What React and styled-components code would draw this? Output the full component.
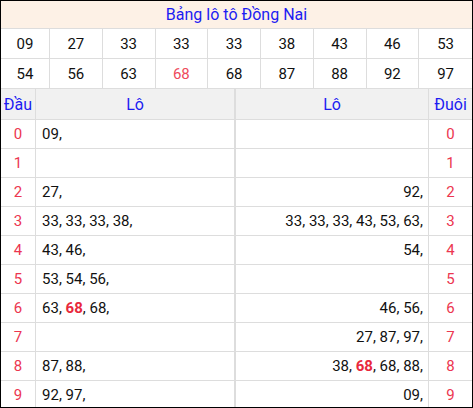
import React from "react";
import styled, { createGlobalStyle } from "styled-components";

const Global = createGlobalStyle`
  html, body { margin: 0; padding: 0; background: #fff; }
  body { font-family: Roboto, "Liberation Sans", Arial, sans-serif; }
`;

const Board = styled.div`
  width: 473px;
  height: 408px;
  box-sizing: border-box;
  border: 1px solid #000;
  overflow: hidden;
  font-family: Roboto, "Liberation Sans", Arial, sans-serif;
  color: #000;
`;

const Title = styled.div`
  height: 28px;
  box-sizing: border-box;
  border-bottom: 1px solid #dddddd;
  background: #fdf1e6;
  color: #1c1cf2;
  font-size: 16px;
  display: flex;
  align-items: center;
  justify-content: center;
`;

const Numbers = styled.div`
  display: grid;
  grid-template-columns: 49px repeat(8, 1fr);
`;

const NumCell = styled.div`
  height: 30px;
  box-sizing: border-box;
  border-bottom: 1px solid #dddddd;
  border-right: ${(p) => (p.$last ? "none" : "1px solid #dddddd")};
  display: flex;
  align-items: center;
  justify-content: center;
  font-size: 15px;
  color: ${(p) => (p.$hit ? "#ee4a5c" : "#111")};
`;

const Loto = styled.div`
  display: grid;
  grid-template-columns: 35px 199px 194px 1fr;
`;

const Cell = styled.div`
  height: ${(p) => (p.$head ? "31px" : "29px")};
  box-sizing: border-box;
  border-bottom: 1px solid #dddddd;
  border-right: ${(p) => (p.$noRight ? "none" : "1px solid #dddddd")};
  border-left: ${(p) => (p.$leftLine ? "1px solid #dddddd" : "none")};
  background: ${(p) => (p.$head ? "#f1f1f1" : "#fff")};
  display: flex;
  align-items: center;
  justify-content: ${(p) =>
    p.$align === "left" ? "flex-start" : p.$align === "right" ? "flex-end" : "center"};
  padding: ${(p) =>
    p.$align === "left" ? "0 0 0 6px" : p.$align === "right" ? "0 5px 0 0" : "0"};
  font-size: ${(p) => (p.$head ? "16px" : "15px")};
  color: ${(p) => (p.$head ? "#1c1cf2" : p.$digit ? "#ec3650" : "#111")};
  white-space: nowrap;
`;

const Hot = styled.b`
  color: #e8283c;
  font-weight: 700;
`;

const row1 = ["09", "27", "33", "33", "33", "38", "43", "46", "53"];
const row2 = ["54", "56", "63", "68", "68", "87", "88", "92", "97"];

const dau = [
  ["09"],
  [],
  ["27"],
  ["33", "33", "33", "38"],
  ["43", "46"],
  ["53", "54", "56"],
  ["63", "68*", "68"],
  [],
  ["87", "88"],
  ["92", "97"],
];

const duoi = [
  [],
  [],
  ["92"],
  ["33", "33", "33", "43", "53", "63"],
  ["54"],
  [],
  ["46", "56"],
  ["27", "87", "97"],
  ["38", "68*", "68", "88"],
  ["09"],
];

function List({ items }) {
  return (
    <>
      {items.map((n, i) => (
        <React.Fragment key={i}>
          {i > 0 ? "\u00a0" : ""}
          {n.endsWith("*") ? <Hot>{n.slice(0, -1)}</Hot> : n}
          ,
        </React.Fragment>
      ))}
    </>
  );
}

export default function App() {
  return (
    <>
      <Global />
      <Board>
        <Title>Bảng lô tô Đồng Nai</Title>
        <Numbers>
          {row1.map((n, i) => (
            <NumCell key={"a" + i} $last={i === 8}>
              {n}
            </NumCell>
          ))}
          {row2.map((n, i) => (
            <NumCell key={"b" + i} $last={i === 8} $hit={i === 3}>
              {n}
            </NumCell>
          ))}
        </Numbers>
        <Loto>
          <Cell $head>Đầu</Cell>
          <Cell $head>Lô</Cell>
          <Cell $head $leftLine>Lô</Cell>
          <Cell $head $noRight>Đuôi</Cell>
          {dau.map((items, d) => (
            <React.Fragment key={d}>
              <Cell $digit>{d}</Cell>
              <Cell $align="left">
                <List items={items} />
              </Cell>
              <Cell $align="right" $leftLine>
                <List items={duoi[d]} />
              </Cell>
              <Cell $digit $noRight>{d}</Cell>
            </React.Fragment>
          ))}
        </Loto>
      </Board>
    </>
  );
}
